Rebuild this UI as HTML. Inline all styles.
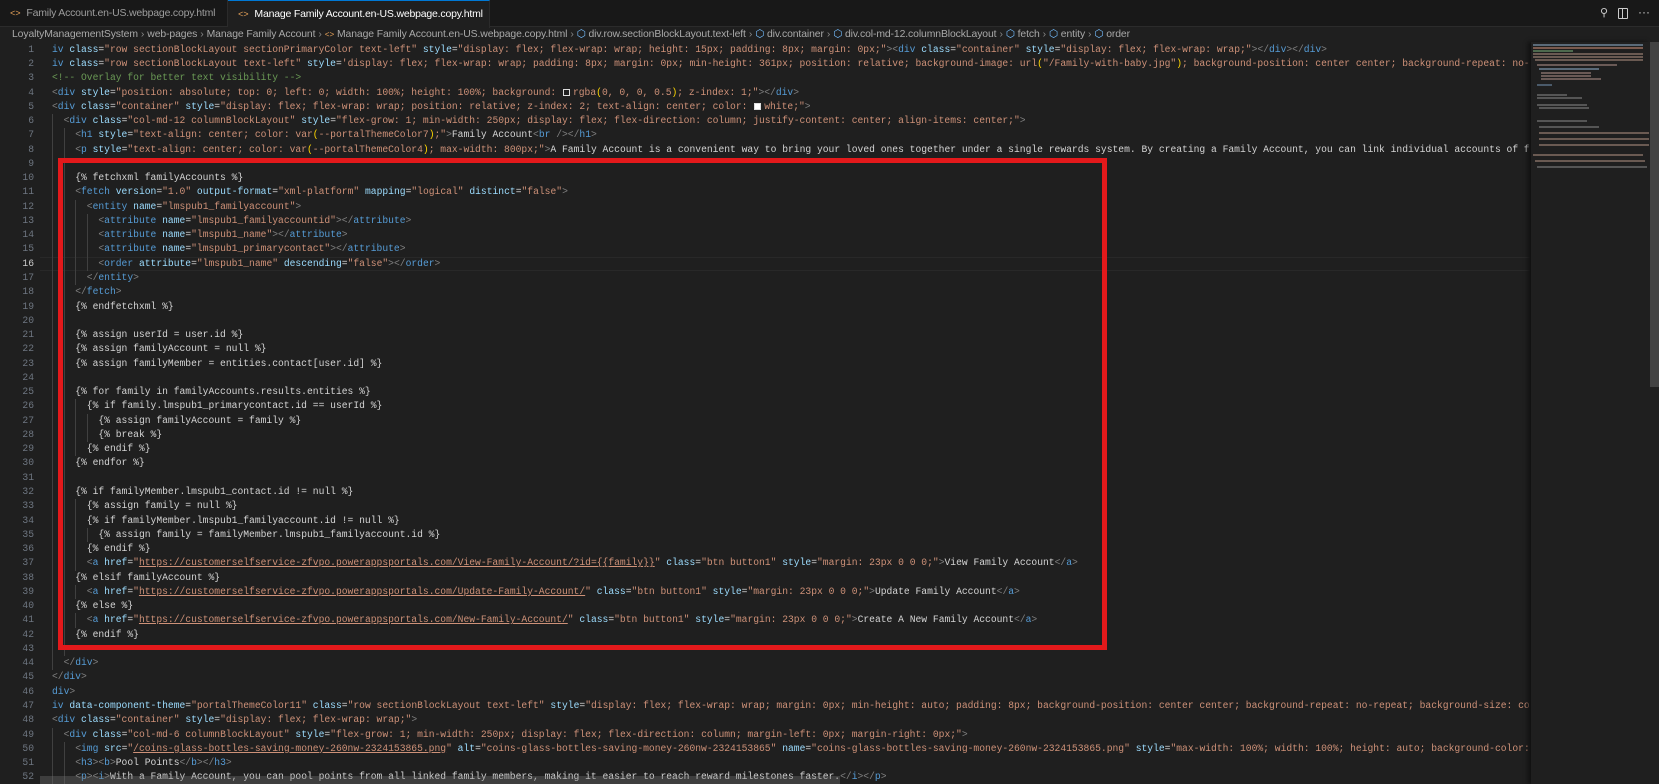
<!DOCTYPE html>
<html><head><meta charset="utf-8">
<style>
*{margin:0;padding:0;box-sizing:border-box}
html,body{width:1659px;height:784px;overflow:hidden;background:#1f1f1f}
body{position:relative;font-family:"Liberation Sans",sans-serif}
#tabs{position:absolute;left:0;top:0;width:1659px;height:27px;background:#181818;border-bottom:1px solid #2b2b2b}
.tab{position:absolute;top:0;height:27px;font-size:10.5px;letter-spacing:-0.2px;line-height:27px;color:#9d9d9d;white-space:nowrap;overflow:hidden}
.tab .ic{color:#e8a35a;font-size:9px;margin-right:6px;font-family:"Liberation Mono",monospace}
#tab1{left:0;width:228px;padding-left:10px;border-right:1px solid #2b2b2b}
#tab2{left:228px;width:262px;padding-left:10px;background:#1f1f1f;color:#ffffff;border-top:1px solid #0078d4;height:28px;border-right:1px solid #2b2b2b}
#bc{position:absolute;left:12px;top:27px;height:16px;font-size:10.4px;line-height:16px;color:#a9a9a9;white-space:nowrap;letter-spacing:-0.1px}
#bc .sep{margin:0 3px;color:#8a8a8a}
#bc .cube{color:#75beff}
#bc .ic{color:#e8a35a;font-family:"Liberation Mono",monospace;font-size:8px}
#code{position:absolute;left:0;top:42.75px;width:1530px;height:742px;overflow:hidden;font-family:"Liberation Mono",monospace;font-size:9.67px;color:#d4d4d4}
.l{position:relative;height:14.28px;line-height:14.28px;white-space:pre}
.n{position:absolute;left:0;width:34px;text-align:right;color:#6e7681}
.c0{position:absolute;left:52px}
.g{display:inline-block;width:11.6px;border-left:1px solid #404040;height:14.28px;vertical-align:top}
.t{color:#569cd6}.a{color:#9cdcfe}.s{color:#ce9178}.p{color:#808080}.cm{color:#6a9955}
.u{text-decoration:underline;text-decoration-color:#ce9178}
.y{color:#ffd700}
.sw{display:inline-block;width:7px;height:7px;border:1px solid #ddd;margin:0 3px 0 1px;vertical-align:-1px}
.swf{background:#fff}
#cur{position:absolute;left:40px;width:1490px;border-top:1px solid #282828;border-bottom:1px solid #282828;height:14.28px}
#red{position:absolute;left:58px;top:158px;width:1049px;height:492px;border:5px solid #e3191b}
#mini{position:absolute;left:1531px;top:42px;width:119px;height:742px;background:#1f1f1f;box-shadow:-3px 0 4px #111}
#vs{position:absolute;left:1650px;top:42px;width:9px;height:742px;background:#1f1f1f}
#vs div{position:absolute;left:0;top:0;width:9px;height:345px;background:#424242}
#hs{position:absolute;left:40px;top:776px;width:800px;height:8px;background:rgba(121,121,121,.35)}
.mb{position:absolute;height:2px}
</style></head><body>
<div id="tabs">
 <div class="tab" id="tab1"><span class="ic">&lt;&gt;</span>Family Account.en-US.webpage.copy.html</div>
 <div class="tab" id="tab2"><span class="ic">&lt;&gt;</span>Manage Family Account.en-US.webpage.copy.html <span style="margin-left:6px;font-size:11px">●</span></div>
 <div style="position:absolute;left:1600px;top:6px;color:#ccc;font-size:11px">⚲</div>
 <div style="position:absolute;left:1618px;top:8px;width:10px;height:11px;border:1px solid #ccc;border-radius:1px"><div style="position:absolute;left:3px;top:0;width:1px;height:9px;background:#ccc"></div></div>
 <div style="position:absolute;left:1638px;top:5px;color:#ccc;font-size:12px">···</div>
</div>
<div id="bc">LoyaltyManagementSystem<span class="sep">›</span>web-pages<span class="sep">›</span>Manage Family Account<span class="sep">›</span><span class="ic">&lt;&gt;</span> Manage Family Account.en-US.webpage.copy.html<span class="sep">›</span><span class="cube">⬡</span> div.row.sectionBlockLayout.text-left<span class="sep">›</span><span class="cube">⬡</span> div.container<span class="sep">›</span><span class="cube">⬡</span> div.col-md-12.columnBlockLayout<span class="sep">›</span><span class="cube">⬡</span> fetch<span class="sep">›</span><span class="cube">⬡</span> entity<span class="sep">›</span><span class="cube">⬡</span> order</div>

<div id="code">
<div id="cur" style="top:214.2px"></div>
<div class="l"><span class="n">1</span><span class="c0"><span class="t">iv</span> <span class="a">class</span>=<span class="s">"row sectionBlockLayout sectionPrimaryColor text-left"</span> <span class="a">style</span>=<span class="s">"display: flex; flex-wrap: wrap; height: 15px; padding: 8px; margin: 0px;"</span><span class="p">&gt;&lt;</span><span class="t">div</span> <span class="a">class</span>=<span class="s">"container"</span> <span class="a">style</span>=<span class="s">"display: flex; flex-wrap: wrap;"</span><span class="p">&gt;&lt;/</span><span class="t">div</span><span class="p">&gt;&lt;/</span><span class="t">div</span><span class="p">&gt;</span></span></div>
<div class="l"><span class="n">2</span><span class="c0"><span class="t">iv</span> <span class="a">class</span>=<span class="s">"row sectionBlockLayout text-left"</span> <span class="a">style</span>=<span class="s">'display: flex; flex-wrap: wrap; padding: 8px; margin: 0px; min-height: 361px; position: relative; background-image: url<span class="y">(</span>"/Family-with-baby.jpg"<span class="y">)</span>; background-position: center center; background-repeat: no-repeat; background-size: cover;'</span></span></div>
<div class="l"><span class="n">3</span><span class="c0"><span class="cm">&lt;!-- Overlay for better text visibility --&gt;</span></span></div>
<div class="l"><span class="n">4</span><span class="c0"><span class="p">&lt;</span><span class="t">div</span> <span class="a">style</span>=<span class="s">"position: absolute; top: 0; left: 0; width: 100%; height: 100%; background: <span class="sw"></span>rgba<span class="y">(</span>0, 0, 0, 0.5<span class="y">)</span>; z-index: 1;"</span><span class="p">&gt;&lt;/</span><span class="t">div</span><span class="p">&gt;</span></span></div>
<div class="l"><span class="n">5</span><span class="c0"><span class="p">&lt;</span><span class="t">div</span> <span class="a">class</span>=<span class="s">"container"</span> <span class="a">style</span>=<span class="s">"display: flex; flex-wrap: wrap; position: relative; z-index: 2; text-align: center; color: <span class="sw swf"></span>white;"</span><span class="p">&gt;</span></span></div>
<div class="l"><span class="n">6</span><span class="c0"><span class="g"></span><span class="p">&lt;</span><span class="t">div</span> <span class="a">class</span>=<span class="s">"col-md-12 columnBlockLayout"</span> <span class="a">style</span>=<span class="s">"flex-grow: 1; min-width: 250px; display: flex; flex-direction: column; justify-content: center; align-items: center;"</span><span class="p">&gt;</span></span></div>
<div class="l"><span class="n">7</span><span class="c0"><span class="g"></span><span class="g"></span><span class="p">&lt;</span><span class="t">h1</span> <span class="a">style</span>=<span class="s">"text-align: center; color: var<span class="y">(</span>--portalThemeColor7<span class="y">)</span>;"</span><span class="p">&gt;</span>Family Account<span class="p">&lt;</span><span class="t">br</span> <span class="p">/&gt;&lt;/</span><span class="t">h1</span><span class="p">&gt;</span></span></div>
<div class="l"><span class="n">8</span><span class="c0"><span class="g"></span><span class="g"></span><span class="p">&lt;</span><span class="t">p</span> <span class="a">style</span>=<span class="s">"text-align: center; color: var<span class="y">(</span>--portalThemeColor4<span class="y">)</span>; max-width: 800px;"</span><span class="p">&gt;</span>A Family Account is a convenient way to bring your loved ones together under a single rewards system. By creating a Family Account, you can link individual accounts of family members</span></div>
<div class="l"><span class="n">9</span><span class="c0"><span class="g"></span><span class="g"></span></span></div>
<div class="l"><span class="n">10</span><span class="c0"><span class="g"></span><span class="g"></span>{% fetchxml familyAccounts %}</span></div>
<div class="l"><span class="n">11</span><span class="c0"><span class="g"></span><span class="g"></span><span class="p">&lt;</span><span class="t">fetch</span> <span class="a">version</span>=<span class="s">"1.0"</span> <span class="a">output-format</span>=<span class="s">"xml-platform"</span> <span class="a">mapping</span>=<span class="s">"logical"</span> <span class="a">distinct</span>=<span class="s">"false"</span><span class="p">&gt;</span></span></div>
<div class="l"><span class="n">12</span><span class="c0"><span class="g"></span><span class="g"></span><span class="g"></span><span class="p">&lt;</span><span class="t">entity</span> <span class="a">name</span>=<span class="s">"lmspub1_familyaccount"</span><span class="p">&gt;</span></span></div>
<div class="l"><span class="n">13</span><span class="c0"><span class="g"></span><span class="g"></span><span class="g"></span><span class="g"></span><span class="p">&lt;</span><span class="t">attribute</span> <span class="a">name</span>=<span class="s">"lmspub1_familyaccountid"</span><span class="p">&gt;&lt;/</span><span class="t">attribute</span><span class="p">&gt;</span></span></div>
<div class="l"><span class="n">14</span><span class="c0"><span class="g"></span><span class="g"></span><span class="g"></span><span class="g"></span><span class="p">&lt;</span><span class="t">attribute</span> <span class="a">name</span>=<span class="s">"lmspub1_name"</span><span class="p">&gt;&lt;/</span><span class="t">attribute</span><span class="p">&gt;</span></span></div>
<div class="l"><span class="n">15</span><span class="c0"><span class="g"></span><span class="g"></span><span class="g"></span><span class="g"></span><span class="p">&lt;</span><span class="t">attribute</span> <span class="a">name</span>=<span class="s">"lmspub1_primarycontact"</span><span class="p">&gt;&lt;/</span><span class="t">attribute</span><span class="p">&gt;</span></span></div>
<div class="l"><span class="n" style="color:#ccc">16</span><span class="c0"><span class="g"></span><span class="g"></span><span class="g"></span><span class="g"></span><span class="p">&lt;</span><span class="t">order</span> <span class="a">attribute</span>=<span class="s">"lmspub1_name"</span> <span class="a">descending</span>=<span class="s">"false"</span><span class="p">&gt;&lt;/</span><span class="t">order</span><span class="p">&gt;</span></span></div>
<div class="l"><span class="n">17</span><span class="c0"><span class="g"></span><span class="g"></span><span class="g"></span><span class="p">&lt;/</span><span class="t">entity</span><span class="p">&gt;</span></span></div>
<div class="l"><span class="n">18</span><span class="c0"><span class="g"></span><span class="g"></span><span class="p">&lt;/</span><span class="t">fetch</span><span class="p">&gt;</span></span></div>
<div class="l"><span class="n">19</span><span class="c0"><span class="g"></span><span class="g"></span>{% endfetchxml %}</span></div>
<div class="l"><span class="n">20</span><span class="c0"><span class="g"></span><span class="g"></span></span></div>
<div class="l"><span class="n">21</span><span class="c0"><span class="g"></span><span class="g"></span>{% assign userId = user.id %}</span></div>
<div class="l"><span class="n">22</span><span class="c0"><span class="g"></span><span class="g"></span>{% assign familyAccount = null %}</span></div>
<div class="l"><span class="n">23</span><span class="c0"><span class="g"></span><span class="g"></span>{% assign familyMember = entities.contact[user.id] %}</span></div>
<div class="l"><span class="n">24</span><span class="c0"><span class="g"></span><span class="g"></span></span></div>
<div class="l"><span class="n">25</span><span class="c0"><span class="g"></span><span class="g"></span>{% for family in familyAccounts.results.entities %}</span></div>
<div class="l"><span class="n">26</span><span class="c0"><span class="g"></span><span class="g"></span><span class="g"></span>{% if family.lmspub1_primarycontact.id == userId %}</span></div>
<div class="l"><span class="n">27</span><span class="c0"><span class="g"></span><span class="g"></span><span class="g"></span><span class="g"></span>{% assign familyAccount = family %}</span></div>
<div class="l"><span class="n">28</span><span class="c0"><span class="g"></span><span class="g"></span><span class="g"></span><span class="g"></span>{% break %}</span></div>
<div class="l"><span class="n">29</span><span class="c0"><span class="g"></span><span class="g"></span><span class="g"></span>{% endif %}</span></div>
<div class="l"><span class="n">30</span><span class="c0"><span class="g"></span><span class="g"></span>{% endfor %}</span></div>
<div class="l"><span class="n">31</span><span class="c0"><span class="g"></span><span class="g"></span></span></div>
<div class="l"><span class="n">32</span><span class="c0"><span class="g"></span><span class="g"></span>{% if familyMember.lmspub1_contact.id != null %}</span></div>
<div class="l"><span class="n">33</span><span class="c0"><span class="g"></span><span class="g"></span><span class="g"></span>{% assign family = null %}</span></div>
<div class="l"><span class="n">34</span><span class="c0"><span class="g"></span><span class="g"></span><span class="g"></span>{% if familyMember.lmspub1_familyaccount.id != null %}</span></div>
<div class="l"><span class="n">35</span><span class="c0"><span class="g"></span><span class="g"></span><span class="g"></span><span class="g"></span>{% assign family = familyMember.lmspub1_familyaccount.id %}</span></div>
<div class="l"><span class="n">36</span><span class="c0"><span class="g"></span><span class="g"></span><span class="g"></span>{% endif %}</span></div>
<div class="l"><span class="n">37</span><span class="c0"><span class="g"></span><span class="g"></span><span class="g"></span><span class="p">&lt;</span><span class="t">a</span> <span class="a">href</span>=<span class="s">"<span class="u">https://customerselfservice-zfvpo.powerappsportals.com/View-Family-Account/?id={{family}}</span>"</span> <span class="a">class</span>=<span class="s">"btn button1"</span> <span class="a">style</span>=<span class="s">"margin: 23px 0 0 0;"</span><span class="p">&gt;</span>View Family Account<span class="p">&lt;/</span><span class="t">a</span><span class="p">&gt;</span></span></div>
<div class="l"><span class="n">38</span><span class="c0"><span class="g"></span><span class="g"></span>{% elsif familyAccount %}</span></div>
<div class="l"><span class="n">39</span><span class="c0"><span class="g"></span><span class="g"></span><span class="g"></span><span class="p">&lt;</span><span class="t">a</span> <span class="a">href</span>=<span class="s">"<span class="u">https://customerselfservice-zfvpo.powerappsportals.com/Update-Family-Account/</span>"</span> <span class="a">class</span>=<span class="s">"btn button1"</span> <span class="a">style</span>=<span class="s">"margin: 23px 0 0 0;"</span><span class="p">&gt;</span>Update Family Account<span class="p">&lt;/</span><span class="t">a</span><span class="p">&gt;</span></span></div>
<div class="l"><span class="n">40</span><span class="c0"><span class="g"></span><span class="g"></span>{% else %}</span></div>
<div class="l"><span class="n">41</span><span class="c0"><span class="g"></span><span class="g"></span><span class="g"></span><span class="p">&lt;</span><span class="t">a</span> <span class="a">href</span>=<span class="s">"<span class="u">https://customerselfservice-zfvpo.powerappsportals.com/New-Family-Account/</span>"</span> <span class="a">class</span>=<span class="s">"btn button1"</span> <span class="a">style</span>=<span class="s">"margin: 23px 0 0 0;"</span><span class="p">&gt;</span>Create A New Family Account<span class="p">&lt;/</span><span class="t">a</span><span class="p">&gt;</span></span></div>
<div class="l"><span class="n">42</span><span class="c0"><span class="g"></span><span class="g"></span>{% endif %}</span></div>
<div class="l"><span class="n">43</span><span class="c0"><span class="g"></span><span class="g"></span></span></div>
<div class="l"><span class="n">44</span><span class="c0"><span class="g"></span><span class="p">&lt;/</span><span class="t">div</span><span class="p">&gt;</span></span></div>
<div class="l"><span class="n">45</span><span class="c0"><span class="p">&lt;/</span><span class="t">div</span><span class="p">&gt;</span></span></div>
<div class="l"><span class="n">46</span><span class="c0"><span class="t">div</span><span class="p">&gt;</span></span></div>
<div class="l"><span class="n">47</span><span class="c0"><span class="t">iv</span> <span class="a">data-component-theme</span>=<span class="s">"portalThemeColor11"</span> <span class="a">class</span>=<span class="s">"row sectionBlockLayout text-left"</span> <span class="a">style</span>=<span class="s">"display: flex; flex-wrap: wrap; margin: 0px; min-height: auto; padding: 8px; background-position: center center; background-repeat: no-repeat; background-size: cover;"</span></span></div>
<div class="l"><span class="n">48</span><span class="c0"><span class="p">&lt;</span><span class="t">div</span> <span class="a">class</span>=<span class="s">"container"</span> <span class="a">style</span>=<span class="s">"display: flex; flex-wrap: wrap;"</span><span class="p">&gt;</span></span></div>
<div class="l"><span class="n">49</span><span class="c0"><span class="g"></span><span class="p">&lt;</span><span class="t">div</span> <span class="a">class</span>=<span class="s">"col-md-6 columnBlockLayout"</span> <span class="a">style</span>=<span class="s">"flex-grow: 1; min-width: 250px; display: flex; flex-direction: column; margin-left: 0px; margin-right: 0px;"</span><span class="p">&gt;</span></span></div>
<div class="l"><span class="n">50</span><span class="c0"><span class="g"></span><span class="g"></span><span class="p">&lt;</span><span class="t">img</span> <span class="a">src</span>=<span class="s">"<span class="u">/coins-glass-bottles-saving-money-260nw-2324153865.png</span>"</span> <span class="a">alt</span>=<span class="s">"coins-glass-bottles-saving-money-260nw-2324153865"</span> <span class="a">name</span>=<span class="s">"coins-glass-bottles-saving-money-260nw-2324153865.png"</span> <span class="a">style</span>=<span class="s">"max-width: 100%; width: 100%; height: auto; background-color: transparent;"</span></span></div>
<div class="l"><span class="n">51</span><span class="c0"><span class="g"></span><span class="g"></span><span class="p">&lt;</span><span class="t">h3</span><span class="p">&gt;&lt;</span><span class="t">b</span><span class="p">&gt;</span>Pool Points<span class="p">&lt;/</span><span class="t">b</span><span class="p">&gt;&lt;/</span><span class="t">h3</span><span class="p">&gt;</span></span></div>
<div class="l"><span class="n">52</span><span class="c0"><span class="g"></span><span class="g"></span><span class="p">&lt;</span><span class="t">p</span><span class="p">&gt;&lt;</span><span class="t">i</span><span class="p">&gt;</span>With a Family Account, you can pool points from all linked family members, making it easier to reach reward milestones faster.<span class="p">&lt;/</span><span class="t">i</span><span class="p">&gt;&lt;/</span><span class="t">p</span><span class="p">&gt;</span></span></div>
</div>
<div id="red"></div>
<div id="hs"></div>
<div id="mini">
 <div class="mb" style="left:2px;top:2px;width:110px;background:#5a6a78"></div>
 <div class="mb" style="left:2px;top:5px;width:110px;background:#7a5a4e"></div>
 <div class="mb" style="left:2px;top:8px;width:40px;background:#4e6a4e"></div>
 <div class="mb" style="left:2px;top:11px;width:110px;background:#6a5a52"></div>
 <div class="mb" style="left:2px;top:14px;width:110px;background:#6a5a52"></div>
 <div class="mb" style="left:4px;top:17px;width:108px;background:#6a5a52"></div>
 <div class="mb" style="left:6px;top:22px;width:80px;background:#6a5a56"></div>
 <div class="mb" style="left:8px;top:26px;width:60px;background:#5a6a78"></div>
 <div class="mb" style="left:10px;top:30px;width:50px;background:#6a5a56"></div>
 <div class="mb" style="left:10px;top:33px;width:50px;background:#6a5a56"></div>
 <div class="mb" style="left:10px;top:36px;width:60px;background:#6a5a56"></div>
 <div class="mb" style="left:6px;top:42px;width:15px;background:#4a5a6a"></div>
 <div class="mb" style="left:6px;top:52px;width:30px;background:#555"></div>
 <div class="mb" style="left:6px;top:55px;width:45px;background:#555"></div>
 <div class="mb" style="left:6px;top:62px;width:50px;background:#555"></div>
 <div class="mb" style="left:8px;top:65px;width:50px;background:#555"></div>
 <div class="mb" style="left:6px;top:78px;width:50px;background:#555"></div>
 <div class="mb" style="left:8px;top:84px;width:60px;background:#555"></div>
 <div class="mb" style="left:8px;top:90px;width:110px;background:#6a5a52"></div>
 <div class="mb" style="left:8px;top:96px;width:110px;background:#6a5a52"></div>
 <div class="mb" style="left:8px;top:102px;width:110px;background:#6a5a52"></div>
 <div class="mb" style="left:2px;top:112px;width:110px;background:#6a5a52"></div>
 <div class="mb" style="left:4px;top:118px;width:110px;background:#6a5a52"></div>
 <div class="mb" style="left:6px;top:124px;width:110px;background:#555"></div>
</div>
<div id="vs"><div></div></div>
</body></html>
